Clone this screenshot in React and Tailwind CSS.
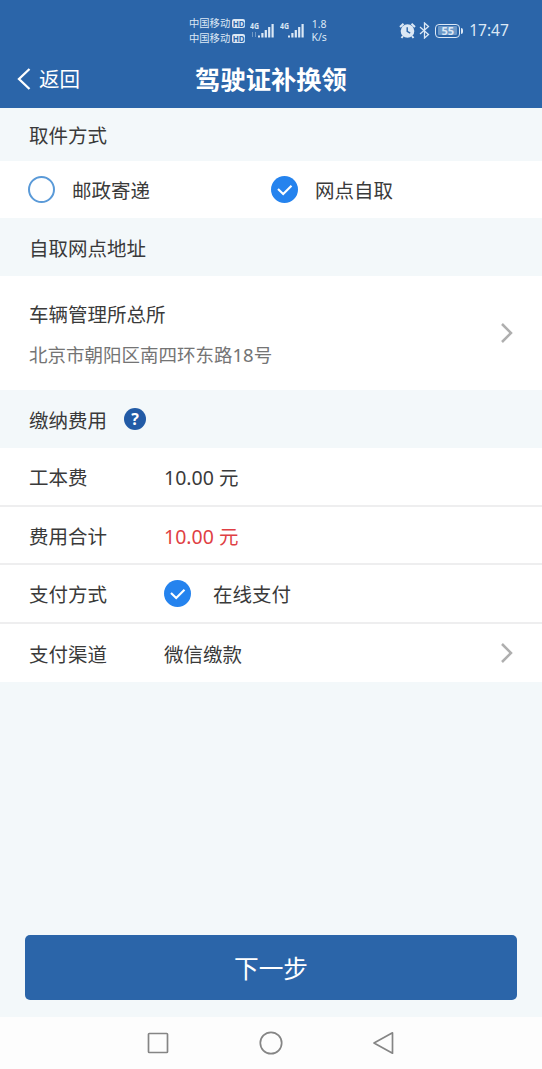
import { useState } from 'react';

export default function App() {
  const [pickup, setPickup] = useState('self'); // 'mail' | 'self'

  return (
    <div className="flex h-[1069px] w-[542px] flex-col overflow-hidden bg-[#f3f8fa] font-['Noto_Sans','Noto_Sans_CJK_SC',sans-serif] text-[19.5px] leading-none text-[#3a3a3a]">
      {/* Header */}
      <header className="h-[108px] shrink-0 bg-[#2b65a9] text-white">
        <StatusBar />
        <div className="grid h-[50px] grid-cols-[195px_1fr_195px] items-center">
          <button className="flex items-center pl-[17px] text-[20.5px]">
            <svg className="mr-[8px] h-[22px] w-[14px]" viewBox="0 0 14 22" fill="none" stroke="currentColor" strokeWidth="2.3">
              <path d="M12.5 1 2 11l10.5 10" />
            </svg>
            <span className="pt-px">返回</span>
          </button>
          <h1 className="whitespace-nowrap pt-[2px] text-center text-[25.3px] font-bold">驾驶证补换领</h1>
        </div>
      </header>

      {/* Pickup method */}
      <SectionTitle className="h-[53px] pt-[2px]">取件方式</SectionTitle>
      <div className="grid h-[57px] shrink-0 grid-cols-[243px_1fr] bg-white pl-[28px]">
        <Radio label="邮政寄递" checked={pickup === 'mail'} onClick={() => setPickup('mail')} />
        <Radio label="网点自取" checked={pickup === 'self'} onClick={() => setPickup('self')} />
      </div>

      {/* Pickup address */}
      <SectionTitle className="h-[58px] pt-[4px]">自取网点地址</SectionTitle>
      <div className="flex h-[114px] shrink-0 items-center justify-between bg-white px-[29px]">
        <div className="space-y-[22px] pt-[3px]">
          <p>车辆管理所总所</p>
          <p className="text-[18.5px] text-[#747474]">北京市朝阳区南四环东路18号</p>
        </div>
        <Chevron />
      </div>

      {/* Fees */}
      <SectionTitle className="h-[58px]">
        <span className="pt-[3px]">缴纳费用</span>
        <span className="ml-[17px] flex size-[22px] items-center justify-center rounded-full bg-[#225ba6] font-['Open_Sans',sans-serif] text-[16px] font-bold text-white">?</span>
      </SectionTitle>
      <div className="shrink-0 divide-y-2 divide-[#eeeeef] bg-white">
        <Row label="工本费">10.00 元</Row>
        <Row label="费用合计"><span className="text-[#df3f44]">10.00 元</span></Row>
        <Row label="支付方式">
          <span className="-my-[4px] pb-[2px]"><CheckMark /></span>
          <span className="ml-[22px]">在线支付</span>
        </Row>
        <Row label="支付渠道" arrow>微信缴款</Row>
      </div>

      <button className="mx-[25px] mt-auto mb-[17px] h-[65px] shrink-0 rounded-[5px] bg-[#2b65a9] pt-[4px] text-[24.7px] text-white">下一步</button>

      {/* System navigation */}
      <nav className="flex h-[52px] shrink-0 items-center justify-center bg-[#fdfdfd] text-[#858585]">
        <svg className="h-[26px] w-[252px]" viewBox="0 0 252 26" fill="none" stroke="currentColor" strokeWidth="1.7" strokeLinejoin="round">
          <rect x="3.5" y="3.5" width="19" height="19" rx="0.8" />
          <circle cx="126" cy="13" r="10.7" />
          <path d="M247.5 2.8v20.4L229 13Z" />
        </svg>
      </nav>
    </div>
  );
}

const StatusBar = () => (
  <div className="flex h-[54px] items-start pl-[189px] text-[#dce8f5]">
    <div className="mt-[18px] space-y-[4px]">
      <Carrier />
      <Carrier />
    </div>
    <Signal data />
    <Signal />
    <div className="mt-[18px] ml-[4px] w-[20px] text-center text-[10.5px] leading-[12px]">
      <p className="h-[13px]">1.8</p>
      <p>K/s</p>
    </div>
    <div className="mt-[22px] ml-[70px] flex items-center">
      <svg className="h-[17px] w-[17px]" viewBox="0 0 17 17">
        <circle cx="8.5" cy="9" r="6.8" fill="currentColor" />
        <path d="M1 5 4.5 1.8M16 5l-3.5-3.2M4 14l-1.5 2M13 14l1.5 2" stroke="currentColor" strokeWidth="2" />
        <path d="M8.2 5.2v4.2l3 1.7" fill="none" stroke="#2b65a9" strokeWidth="1.4" />
      </svg>
      <svg className="ml-[3px] h-[17px] w-[11px]" viewBox="0 0 11 17" fill="none" stroke="currentColor" strokeWidth="1.3">
        <path d="m1 5 8.5 7.5L5.5 16V1l4 3.5L1 12" />
      </svg>
      <div className="ml-[5px] flex h-[14px] w-[25px] items-center justify-center rounded-[4px] border-[1.5px] border-current">
        <span className="flex h-[9px] w-[19px] items-center justify-center rounded-[1px] bg-[#6c98c8] text-[11px] font-bold">55</span>
      </div>
      <span className="ml-[1px] h-[6px] w-[2px] rounded-r bg-current" />
      <span className="ml-[6px] pt-px text-[15.5px]">17:47</span>
    </div>
  </div>
);

const Carrier = () => (
  <div className="flex h-[11px] items-center text-[10.3px]">
    中国移动
    <span className="ml-[2px] flex h-[9px] w-[13px] items-center justify-center rounded-[2px] bg-[#dce8f5] text-[8px] font-bold text-[#2b65a9]">HD</span>
  </div>
);

const Signal = ({ data }) => (
  <svg className="mt-[21px] ml-[5px] h-[18px] w-[25px]" viewBox="0 0 25 18" fill="currentColor">
    <text x="0" y="8" fontSize="8" fontWeight="700" textLength="9" lengthAdjust="spacingAndGlyphs">4G</text>
    {data && <path d="M2.5 11v5M5.5 11v5" stroke="#799fc8" strokeWidth="0.9" />}
    <path d="M8 14.500h2v2H8zM11.300 12h2.200v4.500h-2.200zM14.700 9h2.200v7.500h-2.200zM18.100 6h2.200v10.500h-2.200zM21.500 3h2.200v13.500h-2.200z" />
  </svg>
);

const SectionTitle = ({ className, children }) => (
  <h2 className={`flex shrink-0 items-center pl-[29px] ${className}`}>{children}</h2>
);

const CheckMark = () => (
  <svg className="size-[27px] shrink-0" viewBox="0 0 27 27" fill="none">
    <circle cx="13.5" cy="13.5" r="13.5" fill="#2583ee" />
    <path d="m7 12.9 5.2 5.1 8.3-8.3" stroke="white" strokeWidth="2.1" />
  </svg>
);

const Radio = ({ label, checked, onClick }) => (
  <button onClick={onClick} className="flex items-center">
    {checked ? <CheckMark /> : <span className="size-[27px] rounded-full border-2 border-[#5a9ad8]" />}
    <span className="ml-[17px] pt-[2px]">{label}</span>
  </button>
);

const Chevron = () => (
  <svg className="h-[20px] w-[13px]" viewBox="0 0 13 20" fill="none" stroke="#afafaf" strokeWidth="2.5">
    <path d="m2 1 9 9-9 9" />
  </svg>
);

const Row = ({ label, arrow, children }) => (
  <div className="flex h-[58.5px] items-center px-[29px]">
    <span className="w-[135px] pt-[3px]">{label}</span>
    <div className="flex flex-1 items-center pt-[3px]">{children}</div>
    {arrow && <Chevron />}
  </div>
);
